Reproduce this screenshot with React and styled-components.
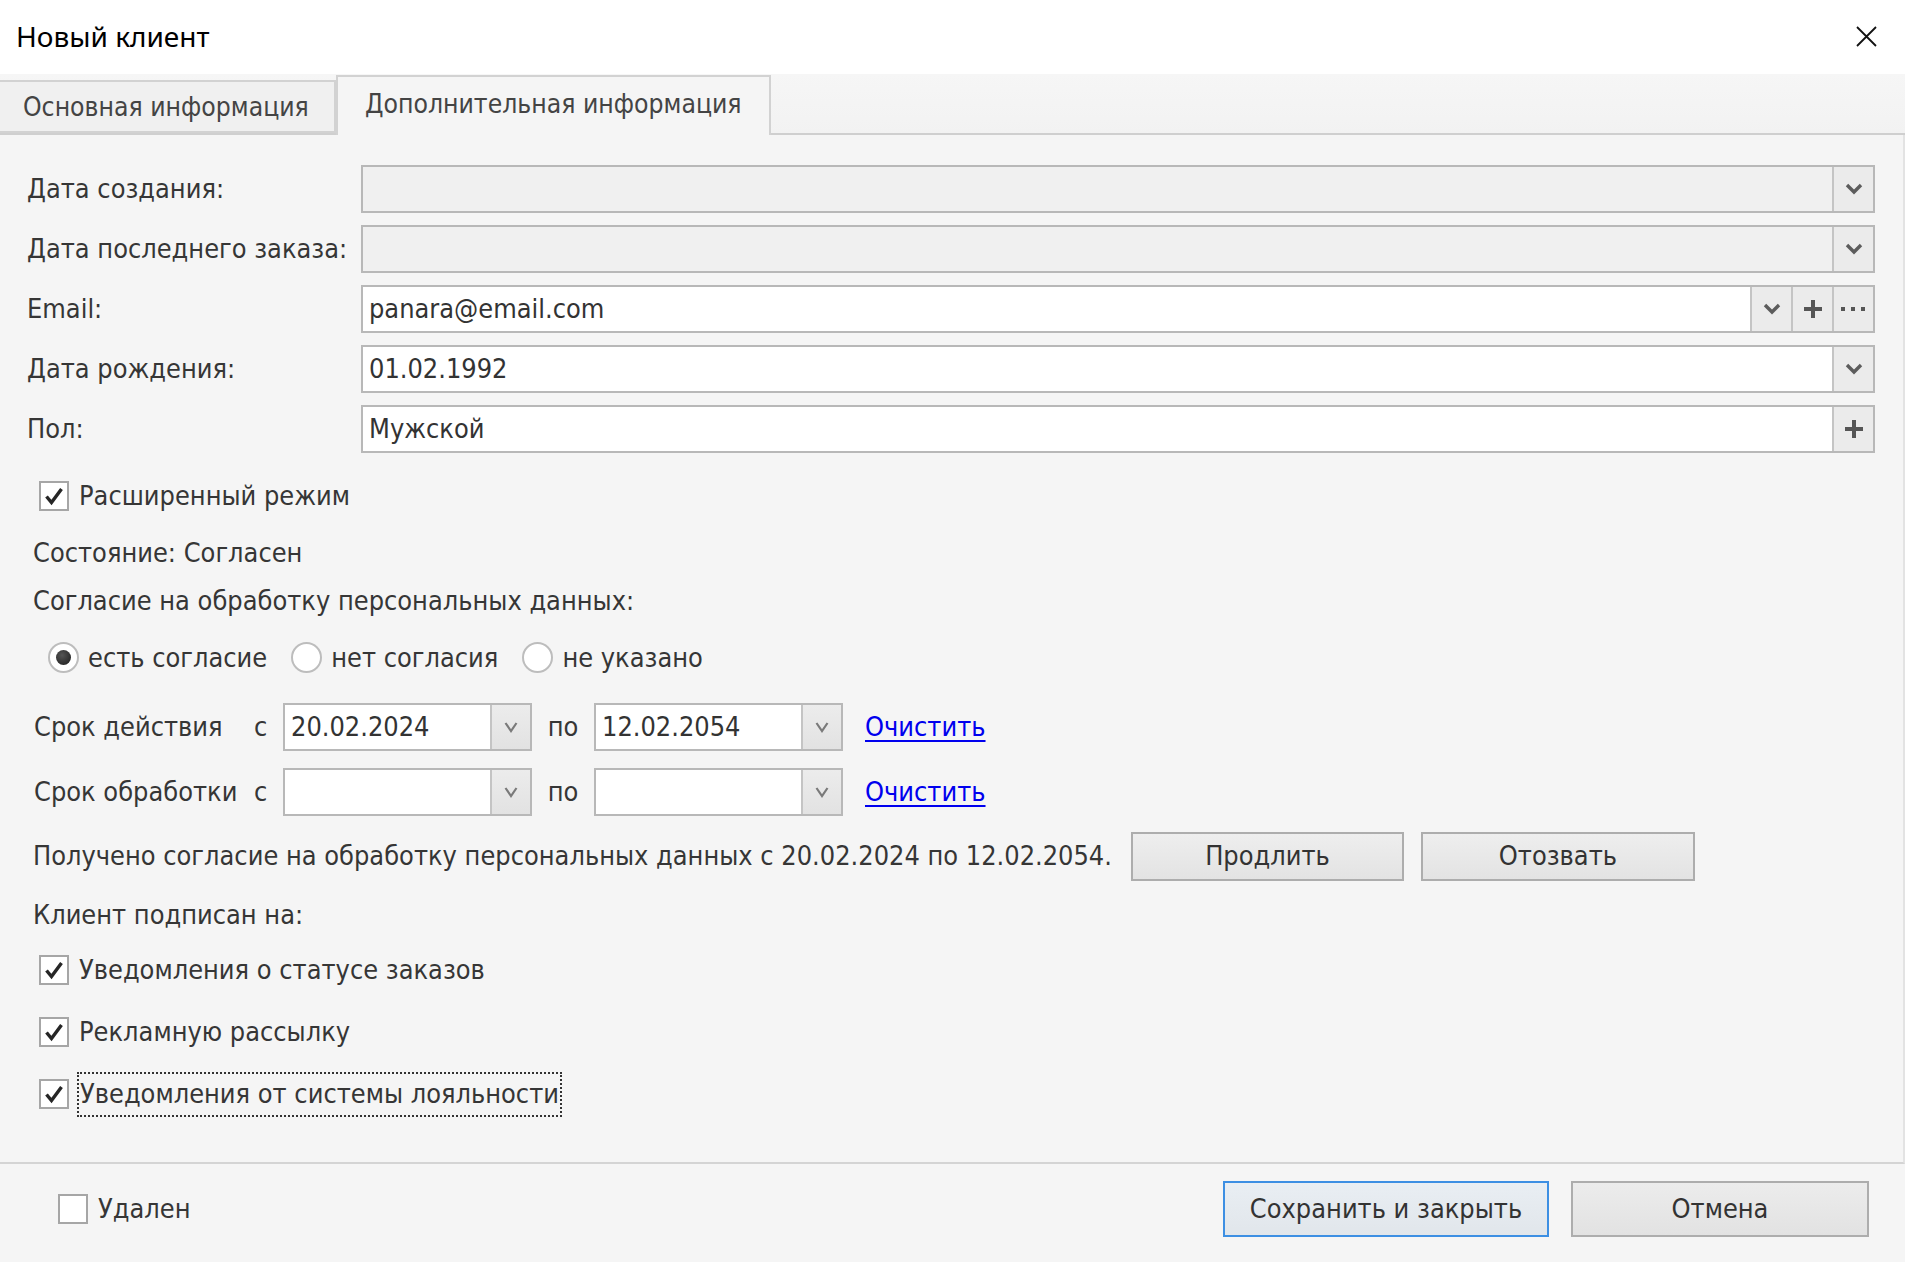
import React from "react";
import styled, { createGlobalStyle } from "styled-components";

const GlobalStyle = createGlobalStyle`
  html, body {
    margin: 0;
    padding: 0;
    background: #f5f5f5;
  }
  body {
    font-family: "DejaVu Sans Condensed", "DejaVu Sans", sans-serif;
    font-stretch: condensed;
    font-size: 26.9px;
    color: #363636;
  }
`;

const Window = styled.div`
  width: 1905px;
  height: 1262px;
  display: flex;
  flex-direction: column;
  background: #f5f5f5;
  overflow: hidden;
`;

const TitleBar = styled.div`
  height: 74px;
  flex: none;
  display: flex;
  align-items: center;
  justify-content: space-between;
  padding: 0 28px 2px 16px;
  box-sizing: border-box;
  background: #ffffff;
`;

const TitleText = styled.div`
  font-family: "Noto Sans", "Open Sans", sans-serif;
  font-stretch: normal;
  font-size: 28px;
  color: #000;
`;

const CloseButton = styled.div`
  width: 22px;
  height: 22px;
  display: flex;
  align-items: center;
  justify-content: center;
`;

const TabStrip = styled.div`
  height: 61px;
  flex: none;
  display: flex;
  align-items: flex-end;
  box-sizing: border-box;
  background: linear-gradient(#f6f6f6, #f2f2f2);
  border-bottom: 2px solid #cfcfcf;
`;

const Tab = styled.div`
  position: relative;
  box-sizing: border-box;
  height: ${(p) => (p.$active ? "60px" : "53px")};
  width: ${(p) => p.$width}px;
  margin-bottom: ${(p) => (p.$active ? "-2px" : "0")};
  padding-left: ${(p) => (p.$active ? "27px" : "23px")};
  display: flex;
  align-items: center;
  font-size: 26.3px;
  background: ${(p) => (p.$active ? "#f5f5f5" : "#f0f0f0")};
  border: 2px solid #d2d2d2;
  border-bottom: ${(p) => (p.$active ? "none" : "2px solid #d2d2d2")};
  border-left: ${(p) => (p.$active ? "2px solid #d2d2d2" : "none")};
  color: #444;
  padding-bottom: ${(p) => (p.$active ? "4px" : "0")};
`;

const Panel = styled.div`
  flex: 1;
  display: flex;
  flex-direction: column;
  padding: 30px 28px 0 0;
  border-right: 2px solid #e3e3e3;
  border-bottom: 2px solid #d4d4d4;
`;

const FieldGrid = styled.div`
  display: grid;
  grid-template-columns: 334px 1fr;
  row-gap: 12px;
  padding-left: 27px;
`;

const FieldLabel = styled.div`
  height: 48px;
  display: flex;
  align-items: center;
  padding-bottom: 2px;
  box-sizing: border-box;
`;

const FieldBox = styled.div`
  height: 48px;
  box-sizing: border-box;
  display: flex;
  border: 2px solid #b8b8b8;
  background: ${(p) => (p.$disabled ? "#f0f0f0" : "#ffffff")};
`;

const FieldValue = styled.div`
  flex: 1;
  display: flex;
  align-items: center;
  padding: 0 0 2px 6px;
  color: #333;
`;

const FieldButton = styled.div`
  width: 39px;
  flex: none;
  display: flex;
  align-items: center;
  justify-content: center;
  background: #ebebeb;
  border-left: 2px solid #c4c4c4;
`;

const Block = styled.div`
  margin-top: ${(p) => p.$top}px;
  padding-left: ${(p) => p.$left || 33}px;
  height: ${(p) => p.$h || 30}px;
  display: flex;
  align-items: center;
`;

const CheckBox = styled.div`
  width: 30px;
  height: 30px;
  box-sizing: border-box;
  flex: none;
  border: 2px solid #a6a6a6;
  background: #fff;
  display: flex;
  align-items: center;
  justify-content: center;
`;

const CheckLabel = styled.div`
  margin-left: ${(p) => (p.$focused ? "8px" : "10px")};
  padding: ${(p) => (p.$focused ? "4px 1px 6px 1px" : "0 0 2px 0")};
  border: ${(p) => (p.$focused ? "2px dotted #333" : "none")};
`;

const RadioItem = styled.div`
  display: flex;
  align-items: center;
  margin-right: 24px;
`;

const RadioCircle = styled.div`
  width: 31px;
  height: 31px;
  box-sizing: border-box;
  border-radius: 50%;
  border: 2px solid #bdbdbd;
  background: #fff;
  display: flex;
  align-items: center;
  justify-content: center;
  margin-right: 9px;

  &::after {
    content: "";
    display: ${(p) => (p.$checked ? "block" : "none")};
    width: 15px;
    height: 15px;
    border-radius: 50%;
    background: radial-gradient(circle at 40% 35%, #555, #1a1a1a);
  }
`;

const DateLabel = styled.div`
  width: 220px;
  flex: none;
  padding-bottom: 2px;
`;

const DateSep = styled.div`
  width: ${(p) => p.$w}px;
  flex: none;
  text-align: ${(p) => p.$align || "center"};
  padding-bottom: 2px;
`;

const DateBox = styled.div`
  width: 249px;
  height: 48px;
  flex: none;
  box-sizing: border-box;
  display: flex;
  border: 2px solid #b8b8b8;
  background: #fff;
`;

const DateButton = styled.div`
  width: 38px;
  flex: none;
  display: flex;
  align-items: center;
  justify-content: center;
  background: linear-gradient(#ececec, #e2e2e2);
  border-left: 2px solid #c4c4c4;
`;

const ClearLink = styled.a`
  margin-left: 22px;
  color: #0000ee;
  text-decoration: underline;
  text-underline-offset: 4px;
  padding-bottom: 2px;
  cursor: pointer;
`;

const ConsentText = styled.div`
  margin-right: 19px;
  padding-bottom: 2px;
`;

const ActionButton = styled.div`
  width: ${(p) => p.$w}px;
  height: 49px;
  box-sizing: border-box;
  margin-right: 17px;
  display: flex;
  align-items: center;
  justify-content: center;
  padding-bottom: 2px;
  background: linear-gradient(#eeeeee, #e3e3e3);
  border: 2px solid #adadad;
  color: #333;
`;

const Footer = styled.div`
  height: 98px;
  flex: none;
  display: flex;
  align-items: center;
  justify-content: space-between;
  padding: 0 36px 8px 58px;
  box-sizing: border-box;
`;

const FooterCheck = styled.div`
  display: flex;
  align-items: center;
`;

const FooterButtons = styled.div`
  display: flex;
  gap: 22px;
`;

const DialogButton = styled.div`
  width: ${(p) => p.$w}px;
  height: 56px;
  box-sizing: border-box;
  display: flex;
  align-items: center;
  justify-content: center;
  padding-bottom: 2px;
  background: ${(p) =>
    p.$primary ? "linear-gradient(#e9eef3, #e1e6eb)" : "linear-gradient(#ececec, #e2e2e2)"};
  border: 2px solid ${(p) => (p.$primary ? "#3d8fe3" : "#adadad")};
  color: #333;
`;

const Chevron = ({ thin }) =>
  thin ? (
    <svg width="14" height="12" viewBox="0 0 14 12">
      <polyline points="1.5,2 7,10 12.5,2" fill="none" stroke="#7a7a7a" strokeWidth="2.2" />
    </svg>
  ) : (
    <svg width="18" height="12" viewBox="0 0 18 12">
      <polyline points="2,2 9,9 16,2" fill="none" stroke="#5c5c5c" strokeWidth="3.4" />
    </svg>
  );

const Plus = () => (
  <svg width="20" height="20" viewBox="0 0 20 20">
    <path d="M10 1 V19 M1 10 H19" stroke="#555" strokeWidth="4" />
  </svg>
);

const Dots = () => (
  <svg width="26" height="6" viewBox="0 0 26 6">
    <rect x="0" y="1" width="4" height="4" fill="#555" />
    <rect x="10" y="1" width="4" height="4" fill="#555" />
    <rect x="20" y="1" width="4" height="4" fill="#555" />
  </svg>
);

const Check = () => (
  <svg width="22" height="22" viewBox="0 0 22 22">
    <path d="M3.5 11.5 L8.5 17.5 L18.5 4" fill="none" stroke="#262626" strokeWidth="3.4" />
  </svg>
);

const Checkbox = ({ checked, label, focused }) => (
  <>
    <CheckBox>{checked && <Check />}</CheckBox>
    <CheckLabel $focused={focused}>{label}</CheckLabel>
  </>
);

const fields = [
  { label: "Дата создания:", value: "", disabled: true, buttons: ["chev"] },
  { label: "Дата последнего заказа:", value: "", disabled: true, buttons: ["chev"] },
  { label: "Email:", value: "panara@email.com", buttons: ["chev", "plus", "dots"] },
  { label: "Дата рождения:", value: "01.02.1992", buttons: ["chev"] },
  { label: "Пол:", value: "Мужской", buttons: ["plus"] },
];

const icons = { chev: <Chevron />, plus: <Plus />, dots: <Dots /> };

const DateInput = ({ value }) => (
  <DateBox>
    <FieldValue>{value}</FieldValue>
    <DateButton>
      <Chevron thin />
    </DateButton>
  </DateBox>
);

export default function App() {
  return (
    <Window>
      <GlobalStyle />
      <TitleBar>
        <TitleText>Новый клиент</TitleText>
        <CloseButton>
          <svg width="21" height="21" viewBox="0 0 21 21">
            <path d="M1 1 L20 20 M20 1 L1 20" stroke="#111" strokeWidth="1.8" />
          </svg>
        </CloseButton>
      </TitleBar>

      <TabStrip>
        <Tab $width={336}>Основная информация</Tab>
        <Tab $width={435} $active>
          Дополнительная информация
        </Tab>
      </TabStrip>

      <Panel>
        <FieldGrid>
          {fields.map((f) => (
            <React.Fragment key={f.label}>
              <FieldLabel>{f.label}</FieldLabel>
              <FieldBox $disabled={f.disabled}>
                <FieldValue>{f.value}</FieldValue>
                {f.buttons.map((b) => (
                  <FieldButton key={b}>{icons[b]}</FieldButton>
                ))}
              </FieldBox>
            </React.Fragment>
          ))}
        </FieldGrid>

        <Block $top={28} $left={39}>
          <Checkbox checked label="Расширенный режим" />
        </Block>
        <Block $top={26}>Состояние: Согласен</Block>
        <Block $top={18}>Согласие на обработку персональных данных:</Block>
        <Block $top={27} $left={48} $h={31}>
          <RadioItem>
            <RadioCircle $checked />
            есть согласие
          </RadioItem>
          <RadioItem>
            <RadioCircle />
            нет согласия
          </RadioItem>
          <RadioItem>
            <RadioCircle />
            не указано
          </RadioItem>
        </Block>

        <Block $top={30} $left={34} $h={48}>
          <DateLabel>Срок действия</DateLabel>
          <DateSep $w={29} $align="left">с</DateSep>
          <DateInput value="20.02.2024" />
          <DateSep $w={62}>по</DateSep>
          <DateInput value="12.02.2054" />
          <ClearLink>Очистить</ClearLink>
        </Block>
        <Block $top={17} $left={34} $h={48}>
          <DateLabel>Срок обработки</DateLabel>
          <DateSep $w={29} $align="left">с</DateSep>
          <DateInput value="" />
          <DateSep $w={62}>по</DateSep>
          <DateInput value="" />
          <ClearLink>Очистить</ClearLink>
        </Block>

        <Block $top={16} $h={49}>
          <ConsentText>
            Получено согласие на обработку персональных данных с 20.02.2024 по 12.02.2054.
          </ConsentText>
          <ActionButton $w={273}>Продлить</ActionButton>
          <ActionButton $w={274}>Отозвать</ActionButton>
        </Block>

        <Block $top={18}>Клиент подписан на:</Block>
        <Block $top={26} $left={39}>
          <Checkbox checked label="Уведомления о статусе заказов" />
        </Block>
        <Block $top={32} $left={39}>
          <Checkbox checked label="Рекламную рассылку" />
        </Block>
        <Block $top={26} $left={39} $h={42}>
          <Checkbox checked focused label="Уведомления от системы лояльности" />
        </Block>
      </Panel>

      <Footer>
        <FooterCheck>
          <Checkbox label="Удален" />
        </FooterCheck>
        <FooterButtons>
          <DialogButton $w={326} $primary>
            Сохранить и закрыть
          </DialogButton>
          <DialogButton $w={298}>Отмена</DialogButton>
        </FooterButtons>
      </Footer>
    </Window>
  );
}
